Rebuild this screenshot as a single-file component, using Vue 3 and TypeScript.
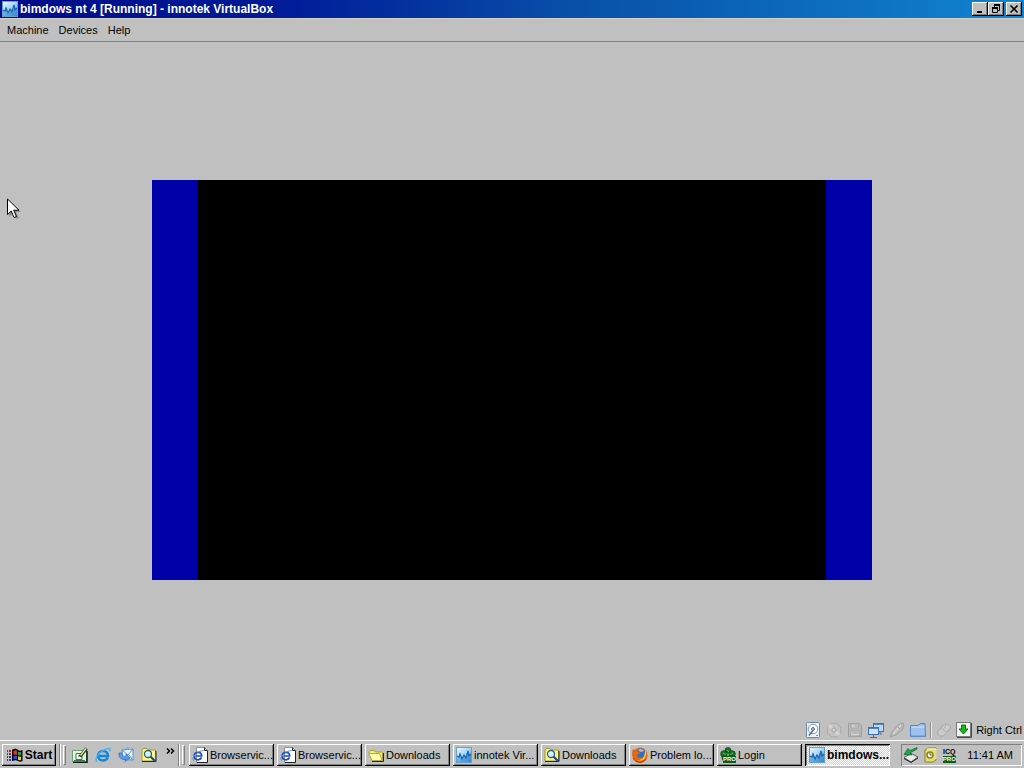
<script setup lang="ts">
interface IconItem {
  label: string
  icon: string
  badges?: string[]
}
interface Task extends IconItem {
  id: number
  active?: boolean
}

const menus: string[] = ['Machine', 'Devices', 'Help']

const quickLaunch: IconItem[] = [
  { label: 'Show Desktop', icon: 'desktop' },
  { label: 'Internet Explorer', icon: 'ie' },
  { label: 'Outlook Express', icon: 'outlook' },
  { label: 'Search', icon: 'search' },
]

const tasks: Task[] = [
  { id: 1, label: 'Browservic...', icon: 'iepage' },
  { id: 2, label: 'Browservic...', icon: 'iepage' },
  { id: 3, label: 'Downloads', icon: 'folder' },
  { id: 4, label: 'innotek Vir...', icon: 'vbox' },
  { id: 5, label: 'Downloads', icon: 'search' },
  { id: 6, label: 'Problem lo...', icon: 'firefox' },
  { id: 7, label: 'Login', icon: 'clover', badges: ['PRO'] },
  { id: 8, label: 'bimdows...', icon: 'vbox', active: true },
]

const indicators: IconItem[] = [
  { label: 'Hard disk', icon: 'disk' },
  { label: 'CD/DVD', icon: 'cd' },
  { label: 'Floppy', icon: 'floppy' },
  { label: 'Network', icon: 'net' },
  { label: 'USB', icon: 'usb' },
  { label: 'Shared folders', icon: 'shared' },
]

const tray: IconItem[] = [
  { label: 'Safely remove hardware', icon: 'eject' },
  { label: 'Scheduler', icon: 'note' },
  { label: 'ICQ Pro', icon: 'icq', badges: ['ICQ', 'PRO'] },
]
</script>

<template>
  <div class="screen">
    <svg class="defs" aria-hidden="true">
      <defs>
        <linearGradient id="gVbox" x1="0" y1="0" x2="1" y2="1">
          <stop offset="0" stop-color="#eefaff" />
          <stop offset="0.5" stop-color="#a4d6f4" />
          <stop offset="1" stop-color="#2878c4" />
        </linearGradient>
      </defs>
      <symbol id="vbox" viewBox="0 0 16 16">
        <rect x="0.5" y="0.5" width="15" height="15" fill="url(#gVbox)" stroke="#5ca4d8" />
        <path d="M1 9l2 1 1-3 2 5 2-4 2 3 2-7 1 5 2-2v8H1z" fill="#3c8cd0" opacity=".55" />
        <path d="M1 9l2 1 1-3 2 5 2-4 2 3 2-7 1 5 2-2" fill="none" stroke="#1c66b4" stroke-width="1.300" />
      </symbol>
      <symbol id="iepage" viewBox="0 0 16 16">
        <path d="M4.500 .5h8l3 3v12h-11z" fill="#fff" stroke="#909090" />
        <path d="M12.500 .5v3h3M15.500 4v11.500H5" fill="none" stroke="#202020" />
        <path d="M9.500 10.500c-.8 1.600-2 2.300-3.500 2.300-2.200 0-3.700-1.600-3.700-3.800S3.800 5.300 6 5.300 9.700 6.800 9.700 9H4" fill="none" stroke="#1c4cc0" stroke-width="1.700" />
        <path d="M1.500 13.500C-1 11 5 4 11.500 3.500" fill="none" stroke="#4a8ce4" />
      </symbol>
      <symbol id="ie" viewBox="0 0 16 16">
        <path d="M12.800 10.500c-1 2-2.800 3-4.800 3-3 0-5-2-5-4.800S5 4 8 4s5 2 5 5H4" fill="none" stroke="#1486d8" stroke-width="2.500" />
        <path d="M2.500 14.500C-2 13 4 4 13 1.500c3-.5 2.500 1 1.500 3" fill="none" stroke="#42b4f4" stroke-width="1.300" />
      </symbol>
      <symbol id="folder" viewBox="0 0 16 16">
        <path d="M4 13.500L.8 5 2 3.500h4L8 5h6.500v8.500z" fill="#f4ec7c" stroke="#a89c30" />
        <path d="M4 13.500L.8 6.500h10.500l3 7z" fill="#fffcae" stroke="#b4a83c" />
        <path d="M4 14.500h11.500V6" fill="none" stroke="#222" />
      </symbol>
      <symbol id="search" viewBox="0 0 16 16">
        <path d="M1 14V3l1-1.500h4L7.500 3H14.500v11z" fill="#fff488" stroke="#a89a2c" />
        <path d="M1 14.500h14V4" fill="none" stroke="#222" />
        <circle cx="7" cy="7" r="3.500" fill="#c8f4ff" stroke="#315c7c" stroke-width="1.300" />
        <path d="M5 6.500L7 4.500" stroke="#fff" />
        <path d="M9.500 9.500l5 5" stroke="#1848a0" stroke-width="2.200" />
      </symbol>
      <symbol id="desktop" viewBox="0 0 16 16">
        <path d="M.5 3.500h14v11H.5z" fill="#e8f4d8" stroke="#6c9c78" />
        <path d="M15 4v11.500H1" fill="none" stroke="#081c10" stroke-width="1.500" />
        <path d="M4 6.500h6v6H4z" fill="#fff" stroke="#3c7450" />
        <path d="M6 9h2.500M2 13.500h11" fill="none" stroke="#3c7450" />
        <path d="M8 9.500l6.500-8" stroke="#183c20" stroke-width="3" />
        <path d="M8.500 8.500l5.500-7" stroke="#ece890" stroke-width="1.300" />
      </symbol>
      <symbol id="outlook" viewBox="0 0 16 16">
        <path d="M4 3l11-1v11L5 12.500z" fill="#eaf4ff" stroke="#5890d0" />
        <path d="M4 3l6 5 5-6M15 13l-4-5" fill="none" stroke="#5890d0" />
        <path d="M1 6c-1 5 3 7 7 6l-1 2.500 5-3.500-4-4v2c-3 1-4 0-4-3z" fill="#5c9cec" stroke="#2c68bc" stroke-width=".7" />
        <path d="M7 1l4-1-1 3" fill="#78b4ed" />
      </symbol>
      <symbol id="firefox" viewBox="0 0 16 16">
        <circle cx="8" cy="8" r="7.500" fill="#e86818" />
        <circle cx="8.500" cy="6.500" r="5" fill="#3470bc" />
        <path d="M6 3c2-2 5-1 6 1l-3 1-2-1z" fill="#8cc4ec" />
        <path d="M1 2l2 1c1-1 2-1 3-1L5 4l3 2-3 2c0 3 4 4 6 2 3-1 3-4 2-7 3 4 3 8 0 11-3 3-8 2-11-1C0 10-.5 5 1 2z" fill="#e46813" />
        <path d="M13 3c2 3 1 6 0 8-2 3-5 3-7 2 4 0 7-2 7-10z" fill="#ffcf38" />
        <path d="M1 11c3 5 9 6 13 1" fill="none" stroke="#a83410" />
      </symbol>
      <symbol id="clover" viewBox="0 0 16 16">
        <g fill="#187424" stroke="#073c10" stroke-width=".7">
          <circle cx="8" cy="3.500" r="3" /><circle cx="4" cy="7" r="3.300" />
          <circle cx="12" cy="7" r="3.300" /><circle cx="5" cy="11" r="3" />
          <circle cx="11" cy="11" r="3" />
        </g>
        <path d="M7 3l2 2M3 6l3 2M13 6l-3 2M8 6v3" stroke="#64c068" />
      </symbol>
      <symbol id="disk" viewBox="0 0 16 16">
        <rect x="1.500" y=".5" width="13" height="15" rx="1" fill="#eef4fa" stroke="#6c88a4" />
        <circle cx="8" cy="7" r="4.800" fill="#fff" stroke="#8098b0" />
        <circle cx="8" cy="7" r="1.500" fill="#b0c0d0" stroke="#58728c" />
        <path d="M4 13.500l4-5" stroke="#506c88" stroke-width="1.500" />
        <path d="M11 13.500h2" stroke="#7890a8" />
      </symbol>
      <symbol id="cd" viewBox="0 0 16 16">
        <circle cx="8" cy="8" r="7" fill="#c4c4c4" stroke="#a8a8a8" />
        <path d="M8 8L3 3M8 8l5 5" stroke="#d4d4d4" stroke-width="3" />
        <circle cx="8" cy="8" r="2.200" fill="#d0d0d0" stroke="#a0a0a0" />
      </symbol>
      <symbol id="floppy" viewBox="0 0 16 16">
        <path d="M1.500 1.500h11l2 2v11h-13z" fill="#b8b8b8" stroke="#a0a0a0" />
        <path d="M4 2h7v4H4zM3.500 9h9v5h-9z" fill="#d0d0d0" stroke="#a8a8a8" />
        <path d="M9 3v2M5 11h6" stroke="#a0a0a0" />
      </symbol>
      <symbol id="net" viewBox="0 0 16 16">
        <rect x="5.500" y="1.500" width="10" height="8" fill="#bcd8f6" stroke="#466fa5" />
        <path d="M6 2.500h9" stroke="#4c84c8" />
        <path d="M12 10v2h2" fill="none" stroke="#466fa5" />
        <rect x=".5" y="5.500" width="10" height="7" fill="#cce2fa" stroke="#3f6eab" />
        <path d="M1 6.500h9" stroke="#4c84c8" />
        <path d="M5.500 13v2M2 15.500h7" stroke="#466fa5" />
      </symbol>
      <symbol id="usb" viewBox="0 0 16 16">
        <path d="M1 15l2-5 6-7 5-2 1 3-2 4-6 5z" fill="#b8b8b8" stroke="#a0a0a0" />
        <path d="M4 12l8-9" stroke="#d0d0d0" stroke-width="2" />
        <path d="M9 5l2 2" stroke="#a0a0a0" />
      </symbol>
      <symbol id="shared" viewBox="0 0 16 16">
        <path d="M.5 14.500v-11h8l1.500-2h5l.5 13z" fill="#9cc0f0" stroke="#5484c4" />
        <path d="M1.500 5h13" stroke="#d0e4fc" />
        <path d="M1 14h14" stroke="#6995d4" />
      </symbol>
      <symbol id="mouse" viewBox="0 0 16 16">
        <path d="M1.500 10l6-7c2-2 8 0 7 3l-6 7c-3 3-8 0-7-3z" fill="#cbcbcb" stroke="#a8a8a8" />
        <path d="M5 6l6 4M10 2L8 7" stroke="#b0b0b0" />
      </symbol>
      <symbol id="hostkey" viewBox="0 0 16 16">
        <rect x=".5" y=".5" width="14" height="14" fill="#f2f2f2" stroke="#787878" />
        <path d="M1 15.500h14.500V1" fill="none" stroke="#484848" />
        <path d="M5.500 3h4v4H12l-4.500 5L3 7h2.500z" fill="#18b81c" stroke="#08720c" />
      </symbol>
      <symbol id="eject" viewBox="0 0 16 16">
        <path d="M1 10.500l7-4 7 3.500-7 5z" fill="#ececec" stroke="#555" />
        <path d="M1 11.500l7 4 7-4.500" fill="none" stroke="#222" />
        <path d="M14 .5L7 3.500 5 1.500 1 7.500l8 .5-2-2 7-4z" fill="#21a346" stroke="#086428" stroke-width=".7" />
      </symbol>
      <symbol id="note" viewBox="0 0 16 16">
        <path d="M3 3l3-2h8v12l-3 2H3z" fill="#e4de78" stroke="#8a842c" />
        <path d="M5 2h9v10" fill="none" stroke="#fffce0" />
        <circle cx="8" cy="8" r="3" fill="#fff" stroke="#8a8418" stroke-width="1.500" />
        <path d="M8 6v2h2" fill="none" stroke="#555" />
      </symbol>
    </svg>

    <header class="titlebar">
      <svg class="icon"><use href="#vbox" /></svg>
      <h1>bimdows nt 4 [Running] - innotek VirtualBox</h1>
      <div class="caption">
        <button type="button" aria-label="Minimize">
          <svg viewBox="0 0 12 10"><path d="M3 8h5" stroke="#000" stroke-width="2" /></svg>
        </button>
        <button type="button" aria-label="Restore">
          <svg viewBox="0 0 12 10">
            <path d="M4 1h6M2 4h6" stroke="#000" stroke-width="2" />
            <path d="M4.500 1v2M9.500 1v5.500H8M2.500 4v4.500h5V4" fill="none" stroke="#000" />
          </svg>
        </button>
        <button type="button" aria-label="Close" class="close">
          <svg viewBox="0 0 12 10"><path d="M2.500 1.500l7 7M9.500 1.500l-7 7" stroke="#000" stroke-width="1.600" /></svg>
        </button>
      </div>
    </header>

    <nav class="menubar">
      <button v-for="m in menus" :key="m" type="button">{{ m }}</button>
    </nav>

    <main class="viewport">
      <div class="guest"></div>
    </main>

    <footer class="status">
      <div class="indicators">
        <svg v-for="i in indicators" :key="i.icon" class="icon" role="img" :aria-label="i.label">
          <use :href="'#' + i.icon" />
        </svg>
      </div>
      <span class="divider"></span>
      <svg class="icon" role="img" aria-label="Mouse integration"><use href="#mouse" /></svg>
      <svg class="icon" role="img" aria-label="Host key"><use href="#hostkey" /></svg>
      <span class="hostkey">Right Ctrl</span>
    </footer>

    <div class="taskbar">
      <button type="button" class="raised start">
        <svg class="flag" viewBox="0 0 17 16">
          <path d="M6 3c3-2 5-1 6 0s3 1 4.500 0v11c-2 1-3 1-4.500 0s-3-1-6 0z" fill="#000" />
          <path d="M7.500 4c1.500-1 3-.7 3.500 0v4c-1-.8-2-.8-3.500 0z" fill="#e03428" />
          <path d="M12 4.500c1 .7 2 .7 3 .2v3.500c-1 .5-2 .4-3-.2z" fill="#28a048" />
          <path d="M7.500 9c1.500-.8 2.500-.7 3.500 0v3.500c-1-.7-2-.7-3.500 0z" fill="#2850d8" />
          <path d="M12 9.300c1 .6 2 .6 3 .2V13c-1 .5-2 .4-3-.2z" fill="#e8d038" />
          <path d="M1 4h1M3 4h2M1 7h1M3 7h2" stroke="#b02030" stroke-width="2" />
          <path d="M1 10h1M3 10h2M1 13h1M3 13h2" stroke="#2838b0" stroke-width="2" />
        </svg>
        <span>Start</span>
      </button>
      <span class="groove"></span>
      <span class="grip"></span>
      <div class="quick">
        <button v-for="q in quickLaunch" :key="q.label" type="button" :aria-label="q.label">
          <svg class="icon"><use :href="'#' + q.icon" /></svg>
        </button>
      </div>
      <button type="button" class="more" aria-label="More">
        <svg viewBox="0 0 9 7"><path d="M1 .5l2.500 2.500L1 5.500M5 .5l2.500 2.500L5 5.500" fill="none" stroke="#000" stroke-width="1.500" /></svg>
      </button>
      <span class="groove"></span>
      <span class="grip"></span>
      <div class="tasks">
        <button v-for="t in tasks" :key="t.id" type="button" class="raised task" :class="{ active: t.active }">
          <span class="glyph">
            <svg class="icon"><use :href="'#' + t.icon" /></svg>
            <b v-for="b in t.badges" :key="b" class="badge solid">{{ b }}</b>
          </span>
          <span>{{ t.label }}</span>
        </button>
      </div>
      <div class="tray">
        <template v-for="t in tray" :key="t.icon">
          <span v-if="t.icon === 'icq'" class="icq">
            <b v-for="b in t.badges" :key="b" :class="{ solid: b === 'PRO' }">{{ b }}</b>
          </span>
          <svg v-else class="icon" role="img" :aria-label="t.label"><use :href="'#' + t.icon" /></svg>
        </template>
        <time>11:41 AM</time>
      </div>
    </div>

    <svg class="cursor" viewBox="0 0 15 22" aria-hidden="true">
      <path d="M2 3v16l4-4 3 6 3-1-3-6h5z" fill="#000" opacity=".25" />
      <path d="M.5 1v15.500l3.700-3.500 2.800 6.500 2.500-1-2.800-6.300H12z" fill="#fff" stroke="#000" />
    </svg>
  </div>
</template>

<style>
body {
  background: #c0c0c0;
}
</style>

<style scoped>
.screen {
  position: relative;
  display: flex;
  flex-direction: column;
  min-height: 100vh;
  background: #c0c0c0;
  color: #000;
  font-family: "Liberation Sans", Arial, sans-serif;
  font-size: 11px;
  line-height: 14px;
  overflow: hidden;
}
.defs {
  position: absolute;
  width: 0;
  height: 0;
}
button {
  margin: 0;
  padding: 0;
  border: 0;
  background: none;
  color: inherit;
  font: inherit;
}
.icon {
  flex: none;
  display: block;
  width: 16px;
  height: 16px;
}
.titlebar {
  display: flex;
  align-items: center;
  gap: 2px;
  height: 18px;
  padding: 0 2px;
  background: linear-gradient(90deg, #000c88, #001c98 28%, #0850a8 56%, #1084d0);
  color: #fff;
}
.titlebar h1 {
  flex: 1;
  margin: 0;
  font-size: 12px;
  font-weight: bold;
  line-height: 14px;
  white-space: nowrap;
}
.caption {
  display: flex;
}
.caption button {
  display: flex;
  align-items: center;
  justify-content: center;
  width: 16px;
  height: 14px;
  background: #c0c0c0;
  box-shadow: inset -1px -1px #000, inset 1px 1px #fff, inset -2px -2px #808080;
}
.caption svg {
  width: 12px;
  height: 10px;
}
.caption .close {
  margin-left: 2px;
}
.menubar {
  display: flex;
  align-items: center;
  gap: 10px;
  box-sizing: border-box;
  height: 24px;
  padding: 0 7px;
  border-top: 1px solid #d4d0c8;
  border-bottom: 1px solid #808080;
}
.viewport {
  flex: 1;
  display: flex;
  align-items: center;
  justify-content: center;
}
.guest {
  box-sizing: border-box;
  width: 720px;
  max-width: 100%;
  aspect-ratio: 9 / 5;
  background: #000;
  border: solid #0000a8;
  border-width: 0 46px;
}
.status {
  display: flex;
  align-items: center;
  justify-content: flex-end;
  gap: 4px;
  box-sizing: border-box;
  height: 22px;
  padding: 2px 2px 0 0;
}
.indicators {
  display: flex;
  gap: 5px;
}
.divider {
  width: 1px;
  height: 16px;
  background: #909090;
  border-right: 1px solid #e8e8e8;
}
.hostkey {
  white-space: nowrap;
}
.taskbar {
  display: flex;
  align-items: center;
  box-sizing: border-box;
  height: 28px;
  padding: 2px 2px 1px 2px;
  border-top: 1px solid #fff;
}
.raised {
  background: #c0c0c0;
  box-shadow: inset -1px -1px #000, inset 1px 1px #fff, inset -2px -2px #808080;
}
.start {
  display: flex;
  align-items: center;
  justify-content: center;
  gap: 2px;
  width: 54px;
  height: 22px;
  font-size: 12px;
  font-weight: bold;
}
.flag {
  width: 17px;
  height: 16px;
}
.groove {
  width: 1px;
  height: 22px;
  margin-left: 3px;
  background: #808080;
  border-right: 1px solid #fff;
}
.grip {
  width: 1px;
  height: 18px;
  margin-left: 2px;
  border: 1px solid;
  border-color: #fff #808080 #808080 #fff;
}
.quick {
  display: flex;
  gap: 7px;
  margin-left: 6px;
}
.more {
  align-self: flex-start;
  margin: 5px 0 0 9px;
}
.more svg {
  display: block;
  width: 9px;
  height: 7px;
}
.tasks {
  display: flex;
  flex: 1;
  gap: 3px;
  min-width: 0;
  margin-left: 4px;
}
.task {
  display: flex;
  flex: 0 1 85px;
  align-items: center;
  gap: 2px;
  min-width: 0;
  height: 22px;
  padding: 0 3px;
  white-space: nowrap;
}
.task.active {
  padding-left: 4px;
  background: repeating-conic-gradient(#fff 0 25%, #d0d0d0 0 50%) 0 0 / 2px 2px;
  box-shadow: inset 1px 1px #000, inset -1px -1px #fff, inset 2px 2px #808080;
  font-size: 12px;
  font-weight: bold;
}
.glyph {
  position: relative;
  flex: none;
}
.solid {
  background: #0b5c20;
  color: #fff;
}
.badge {
  position: absolute;
  right: 0;
  bottom: 0;
  font-size: 6px;
  line-height: 7px;
}
.icq {
  display: flex;
  flex-direction: column;
  align-items: center;
  width: 16px;
  font-size: 7px;
  line-height: 8px;
}
.icq .solid {
  font-size: 6px;
  line-height: 7px;
}
.tray {
  display: flex;
  align-items: center;
  gap: 3px;
  height: 22px;
  padding: 0 9px 0 2px;
  box-shadow: inset 1px 1px #808080, inset -1px -1px #fff;
}
.tray time {
  margin-left: 7px;
  white-space: nowrap;
}
.cursor {
  position: absolute;
  left: 7px;
  top: 198px;
  width: 15px;
  height: 22px;
}
</style>
